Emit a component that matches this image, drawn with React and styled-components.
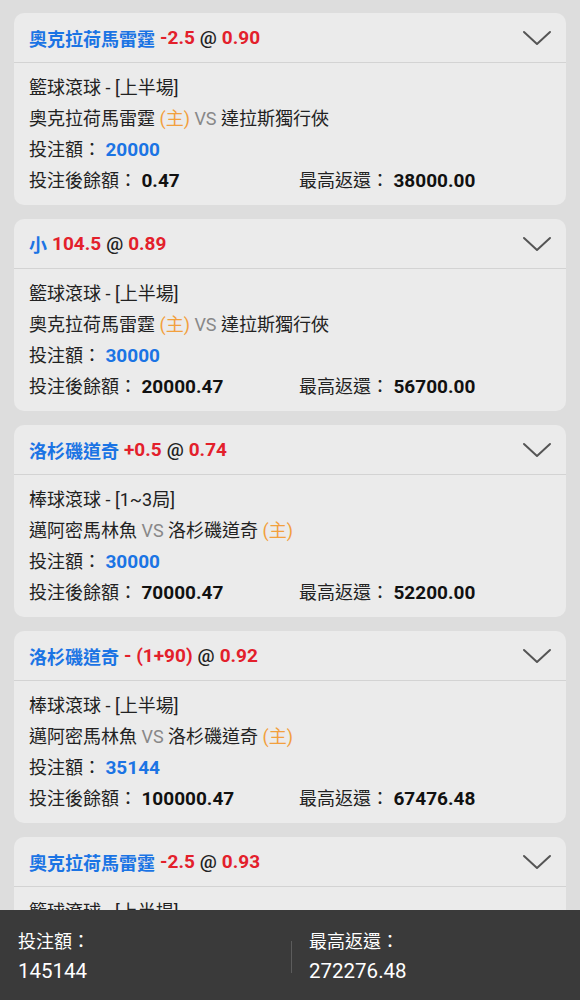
import React from 'react';
import styled, {createGlobalStyle} from 'styled-components';

const BLUE = '#1b74e4';
const RED = '#e3202b';
const ORANGE = '#f2a03d';

const bets = [
  {
    title: [['blue', '奧克拉荷馬雷霆'], ['red', '-2.5'], ['dark', '@'], ['red', '0.90']],
    league: '籃球滾球 - [上半場]',
    home: '奧克拉荷馬雷霆',
    away: '達拉斯獨行俠',
    homeFirst: true,
    stake: '20000',
    balance: '0.47',
    payout: '38000.00',
  },
  {
    title: [['blue', '小'], ['red', '104.5'], ['dark', '@'], ['red', '0.89']],
    league: '籃球滾球 - [上半場]',
    home: '奧克拉荷馬雷霆',
    away: '達拉斯獨行俠',
    homeFirst: true,
    stake: '30000',
    balance: '20000.47',
    payout: '56700.00',
  },
  {
    title: [['blue', '洛杉磯道奇'], ['red', '+0.5'], ['dark', '@'], ['red', '0.74']],
    league: '棒球滾球 - [1~3局]',
    home: '洛杉磯道奇',
    away: '邁阿密馬林魚',
    homeFirst: false,
    stake: '30000',
    balance: '70000.47',
    payout: '52200.00',
  },
  {
    title: [['blue', '洛杉磯道奇'], ['red', '- (1+90)'], ['dark', '@'], ['red', '0.92']],
    league: '棒球滾球 - [上半場]',
    home: '洛杉磯道奇',
    away: '邁阿密馬林魚',
    homeFirst: false,
    stake: '35144',
    balance: '100000.47',
    payout: '67476.48',
  },
  {
    title: [['blue', '奧克拉荷馬雷霆'], ['red', '-2.5'], ['dark', '@'], ['red', '0.93']],
    league: '籃球滾球 - [上半場]',
    home: '奧克拉荷馬雷霆',
    away: '達拉斯獨行俠',
    homeFirst: true,
    stake: '20000',
    balance: '0.47',
    payout: '38000.00',
  },
];

const GlobalStyle = createGlobalStyle`
  body {
    margin: 0;
    background: #dddddd;
    font-family: Roboto, "Noto Sans CJK TC", sans-serif;
  }
`;

const Page = styled.div`
  display: flex;
  flex-direction: column;
  gap: 14px;
  padding: 13px 14px 110px;
`;

const Card = styled.div`
  background: #ebebeb;
  border-radius: 10px;
  overflow: hidden;
`;

const Header = styled.div`
  height: 49px;
  padding: 0 14px 0 15px;
  display: flex;
  align-items: center;
  justify-content: space-between;
  border-bottom: 1px solid #d3d3d3;
`;

const Title = styled.div`
  font-size: 18px;
  font-weight: 700;
  display: flex;
  gap: 5px;
  align-items: center;
`;

const TONES = {blue: BLUE, red: RED, dark: '#222'};

const Tone = styled.span`
  color: ${(p) => TONES[p.$tone]};
  font-weight: ${(p) => (p.$tone === 'dark' ? 500 : 700)};
  font-size: ${(p) => (p.$tone === 'blue' ? '18px' : '19px')};
`;

const Body = styled.div`
  padding: 9px 15px;
  font-size: 18px;
  line-height: 31px;
  color: #222;
`;

const Home = styled.span`
  color: ${ORANGE};
`;

const Vs = styled.span`
  color: #888;
`;

const Strong = styled.span`
  font-weight: 700;
  font-size: 19px;
  color: ${(p) => p.$color || '#111'};
`;

const Split = styled.div`
  display: grid;
  grid-template-columns: 270px 1fr;
`;

const Footer = styled.div`
  position: fixed;
  left: 0;
  right: 0;
  bottom: 0;
  height: 90px;
  background: #3a3a3a;
  display: grid;
  grid-template-columns: 291px 1px 1fr;
  align-items: center;
  color: #fff;
`;

const FooterDivider = styled.div`
  height: 32px;
  margin-top: 4px;
  background: #5c5c5c;
`;

const FooterCol = styled.div`
  padding-left: ${(p) => (p.$right ? '17px' : '18px')};
  padding-top: 4px;
`;

const FooterLabel = styled.div`
  font-size: 18px;
  line-height: 28px;
`;

const FooterValue = styled.div`
  font-size: 20.5px;
  line-height: 30px;
`;

const Chevron = () => (
  <svg width="30" height="18" viewBox="0 0 30 18">
    <path d="M2 3 L15 15 L28 3" fill="none" stroke="#555" strokeWidth="2" strokeLinecap="round" strokeLinejoin="round" />
  </svg>
);

const Teams = ({bet}) => {
  const homePart = (
    <>
      {bet.home} <Home>(主)</Home>
    </>
  );
  return bet.homeFirst ? (
    <div>
      {homePart} <Vs>VS</Vs> {bet.away}
    </div>
  ) : (
    <div>
      {bet.away} <Vs>VS</Vs> {homePart}
    </div>
  );
};

const BetCard = ({bet}) => (
  <Card>
    <Header>
      <Title>
        {bet.title.map(([tone, text], i) => (
          <Tone key={i} $tone={tone}>{text}</Tone>
        ))}
      </Title>
      <Chevron />
    </Header>
    <Body>
      <div>{bet.league}</div>
      <Teams bet={bet} />
      <div>
        投注額： <Strong $color={BLUE}>{bet.stake}</Strong>
      </div>
      <Split>
        <div>
          投注後餘額： <Strong>{bet.balance}</Strong>
        </div>
        <div>
          最高返還： <Strong>{bet.payout}</Strong>
        </div>
      </Split>
    </Body>
  </Card>
);

export default function App() {
  return (
    <>
      <GlobalStyle />
      <Page>
        {bets.map((bet, i) => (
          <BetCard key={i} bet={bet} />
        ))}
      </Page>
      <Footer>
        <FooterCol>
          <FooterLabel>投注額：</FooterLabel>
          <FooterValue>145144</FooterValue>
        </FooterCol>
        <FooterDivider />
        <FooterCol $right>
          <FooterLabel>最高返還：</FooterLabel>
          <FooterValue>272276.48</FooterValue>
        </FooterCol>
      </Footer>
    </>
  );
}
